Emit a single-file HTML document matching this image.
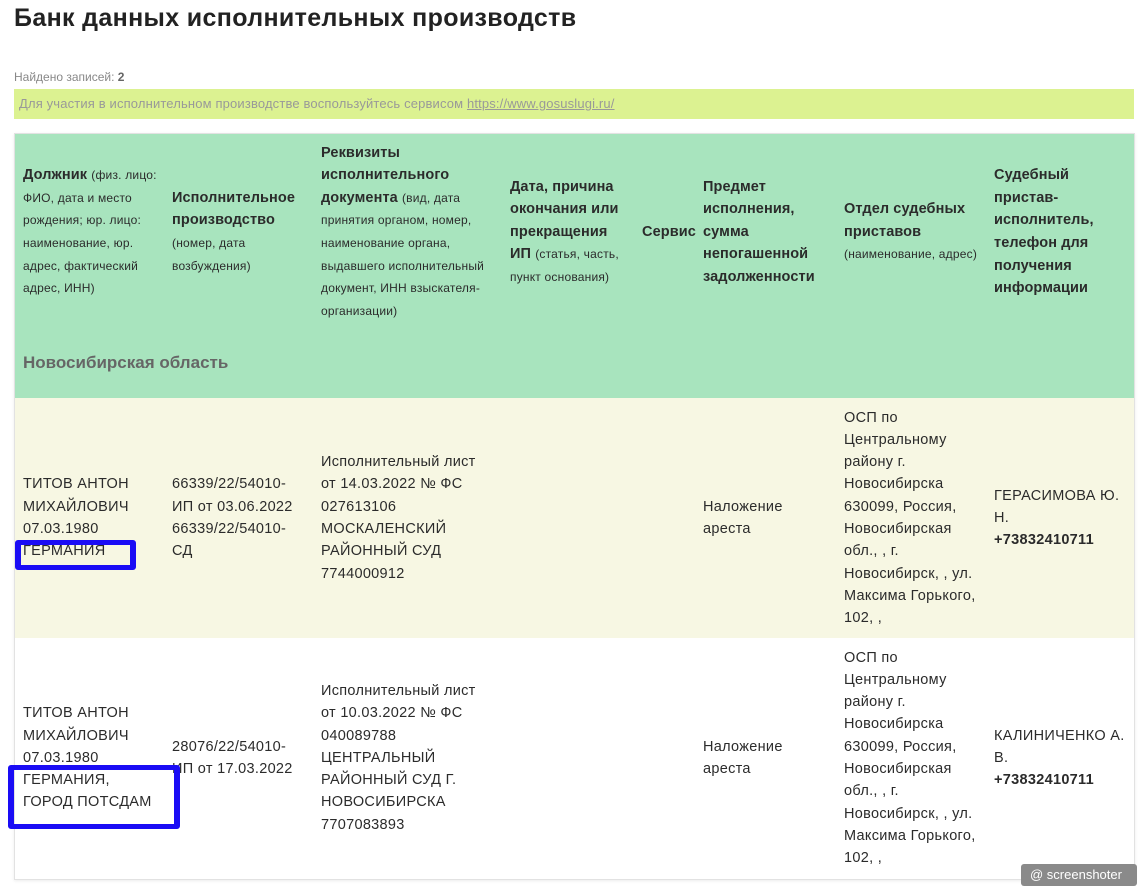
<!DOCTYPE html>
<html><head><meta charset="utf-8"><style>
*{margin:0;padding:0;box-sizing:border-box}
body{width:1143px;height:891px;background:#fff;font-family:"Liberation Sans","DejaVu Sans",sans-serif;color:#2b2b2b;position:relative;overflow:hidden}
.a{position:absolute}
h1{position:absolute;left:14px;top:4px;font-size:25px;font-weight:bold;color:#222;letter-spacing:0.35px}
.cell{position:absolute;display:flex;flex-direction:column;justify-content:center;font-size:14.5px;line-height:22.3px;white-space:nowrap;letter-spacing:0.3px}
.h{font-size:14.5px;line-height:22.6px;font-weight:bold;letter-spacing:0.1px}
.h small{font-size:12px;font-weight:normal;letter-spacing:0.2px}
b{font-weight:bold}
.box{position:absolute;border:5px solid #1a0cf5;border-left-width:6px;border-right-width:6px;border-radius:3px}
</style></head><body>
<h1>Банк данных исполнительных производств</h1>
<div class="a" style="left:14px;top:70px;font-size:12px;color:#888">Найдено записей: <b style="color:#666">2</b></div>
<div class="a" style="left:14px;top:89px;width:1120px;height:30px;background:#dcf291;font-size:13px;color:#999;line-height:30px;padding-left:5px;letter-spacing:0.15px">Для участия в исполнительном производстве воспользуйтесь сервисом <span style="text-decoration:underline">https://www.gosuslugi.ru/</span></div>
<div class="a" style="left:14px;top:133px;width:1121px;height:747px;border:1px solid #e2e2e2;box-shadow:0 1px 3px rgba(0,0,0,.08)"></div>
<div class="a" style="left:15px;top:134px;width:1119px;height:264px;background:#a8e4be"></div>
<div class="a" style="left:15px;top:398px;width:1119px;height:240px;background:#f7f7e3"></div>
<div class="a" style="left:15px;top:638px;width:1119px;height:241px;background:#fff"></div>

<div class="cell h" style="left:23px;top:134px;width:145px;height:196px"><div>Должник <small>(физ. лицо:<br>ФИО, дата и место<br>рождения; юр. лицо:<br>наименование, юр.<br>адрес, фактический<br>адрес, ИНН)</small></div></div>
<div class="cell h" style="left:172px;top:134px;width:140px;height:196px"><div>Исполнительное<br>производство<br><small>(номер, дата<br>возбуждения)</small></div></div>
<div class="cell h" style="left:321px;top:134px;width:180px;height:196px"><div>Реквизиты<br>исполнительного<br>документа <small>(вид, дата<br>принятия органом, номер,<br>наименование органа,<br>выдавшего исполнительный<br>документ, ИНН взыскателя-<br>организации)</small></div></div>
<div class="cell h" style="left:510px;top:134px;width:125px;height:196px"><div>Дата, причина<br>окончания или<br>прекращения<br>ИП <small>(статья, часть,<br>пункт основания)</small></div></div>
<div class="cell h" style="left:642px;top:134px;width:60px;height:196px">Сервис</div>
<div class="cell h" style="left:703px;top:134px;width:130px;height:196px"><div>Предмет<br>исполнения,<br>сумма<br>непогашенной<br>задолженности</div></div>
<div class="cell h" style="left:844px;top:134px;width:145px;height:196px"><div>Отдел судебных<br>приставов<br><small>(наименование, адрес)</small></div></div>
<div class="cell h" style="left:994px;top:134px;width:135px;height:196px"><div>Судебный<br>пристав-<br>исполнитель,<br>телефон для<br>получения<br>информации</div></div>
<div class="a" style="left:23px;top:353px;font-size:17px;font-weight:bold;color:#666">Новосибирская область</div>

<div class="cell" style="left:23px;top:398px;width:145px;height:240px"><div>ТИТОВ АНТОН<br>МИХАЙЛОВИЧ<br>07.03.1980<br>ГЕРМАНИЯ</div></div>
<div class="cell" style="left:172px;top:398px;width:140px;height:240px"><div>66339/22/54010-<br>ИП от 03.06.2022<br>66339/22/54010-<br>СД</div></div>
<div class="cell" style="left:321px;top:398px;width:180px;height:240px"><div>Исполнительный лист<br>от 14.03.2022 № ФС<br>027613106<br>МОСКАЛЕНСКИЙ<br>РАЙОННЫЙ СУД<br>7744000912</div></div>
<div class="cell" style="left:703px;top:398px;width:130px;height:240px"><div>Наложение<br>ареста</div></div>
<div class="cell" style="left:844px;top:398px;width:145px;height:240px"><div>ОСП по<br>Центральному<br>району г.<br>Новосибирска<br>630099, Россия,<br>Новосибирская<br>обл., , г.<br>Новосибирск, , ул.<br>Максима Горького,<br>102, ,</div></div>
<div class="cell" style="left:994px;top:398px;width:138px;height:240px"><div>ГЕРАСИМОВА Ю.<br>Н.<br><b>+73832410711</b></div></div>

<div class="cell" style="left:23px;top:638px;width:145px;height:240px"><div>ТИТОВ АНТОН<br>МИХАЙЛОВИЧ<br>07.03.1980<br>ГЕРМАНИЯ,<br>ГОРОД ПОТСДАМ</div></div>
<div class="cell" style="left:172px;top:638px;width:140px;height:240px"><div>28076/22/54010-<br>ИП от 17.03.2022</div></div>
<div class="cell" style="left:321px;top:638px;width:180px;height:240px"><div>Исполнительный лист<br>от 10.03.2022 № ФС<br>040089788<br>ЦЕНТРАЛЬНЫЙ<br>РАЙОННЫЙ СУД Г.<br>НОВОСИБИРСКА<br>7707083893</div></div>
<div class="cell" style="left:703px;top:638px;width:130px;height:240px"><div>Наложение<br>ареста</div></div>
<div class="cell" style="left:844px;top:638px;width:145px;height:240px"><div>ОСП по<br>Центральному<br>району г.<br>Новосибирска<br>630099, Россия,<br>Новосибирская<br>обл., , г.<br>Новосибирск, , ул.<br>Максима Горького,<br>102, ,</div></div>
<div class="cell" style="left:994px;top:638px;width:138px;height:240px"><div>КАЛИНИЧЕНКО А.<br>В.<br><b>+73832410711</b></div></div>

<div class="box" style="left:15px;top:540px;width:121px;height:30px"></div>
<div class="box" style="left:8px;top:765px;width:172px;height:64px"></div>

<div class="a" style="left:1021px;top:864px;width:116px;height:22px;background:#8a8a8a;border-radius:3px;color:#fff;font-size:13px;line-height:22px;padding-left:9px">@ screenshoter</div>
</body></html>
